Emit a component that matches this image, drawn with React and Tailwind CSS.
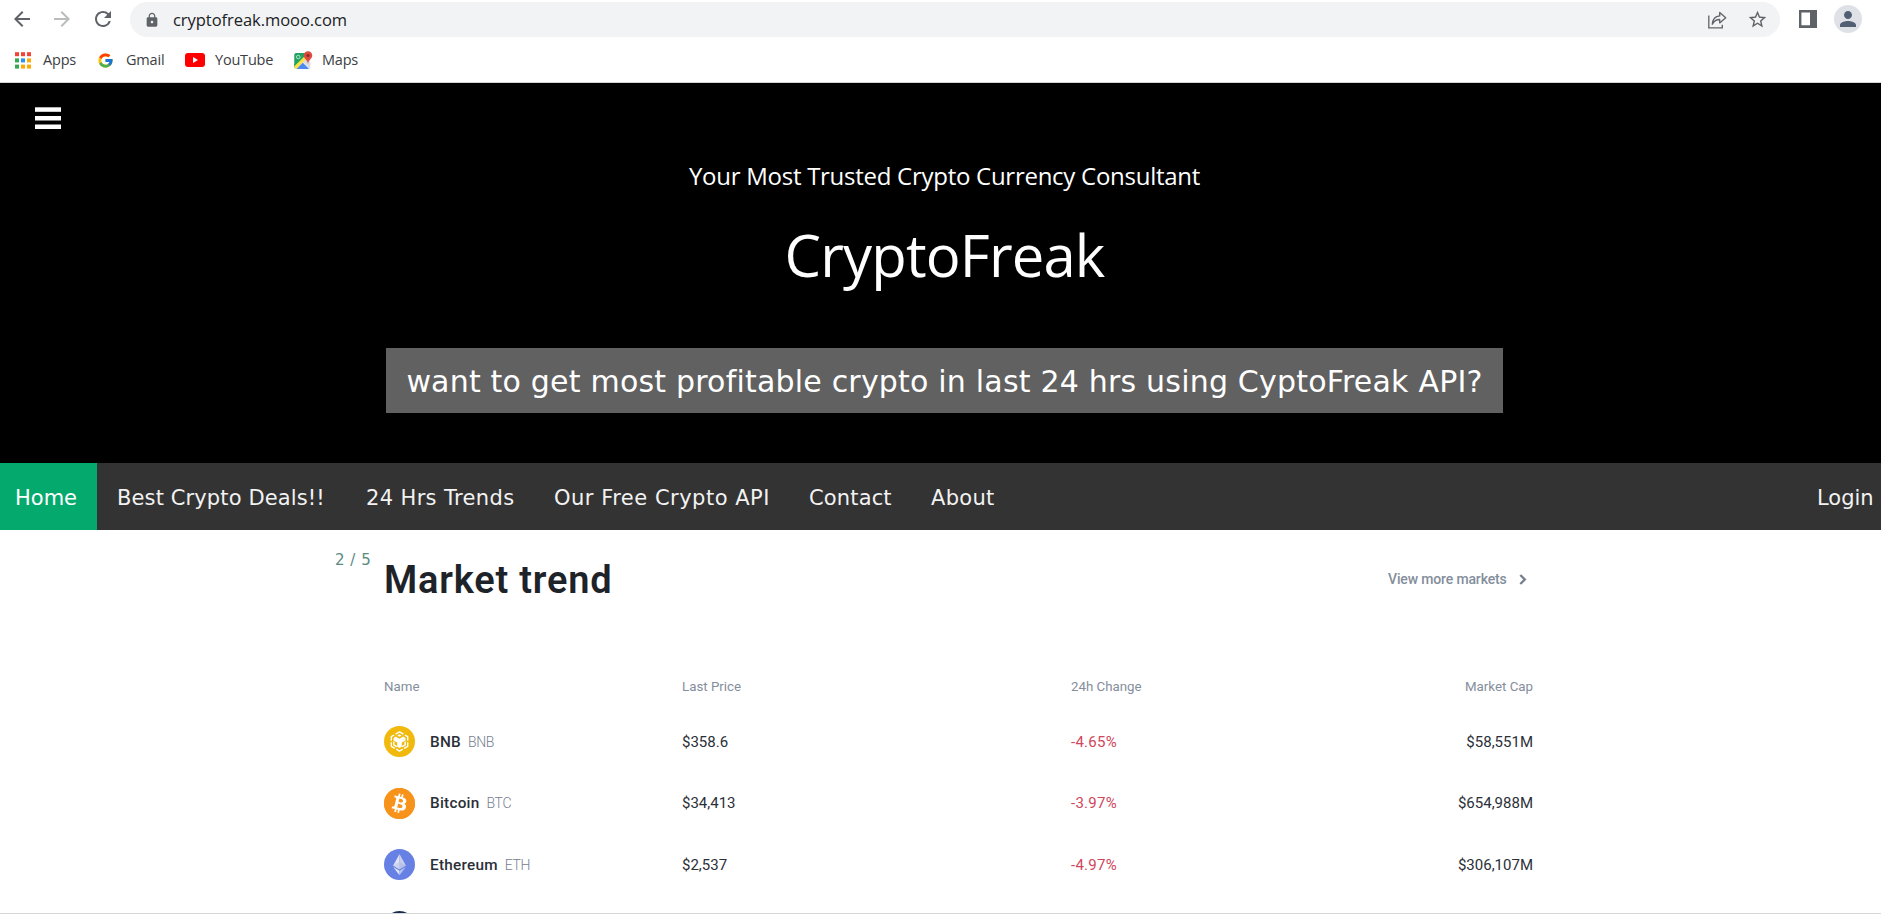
import React from 'react';
import { MdArrowBack, MdArrowForward, MdRefresh, MdLock, MdStarBorder, MdPerson } from 'react-icons/md';
import { FcGoogle } from 'react-icons/fc';
import { SiBitcoin } from 'react-icons/si';

function AppsIcon() {
  const colors = ['#f44336', '#f44336', '#f44336', '#34a853', '#2196f3', '#fbab05', '#34a853', '#fbab05', '#fbab05'];
  return (
    <svg className="h-[17px] w-[17px]" viewBox="0 0 17 17">
      {colors.map((c, i) => (
        <rect key={i} x={(i % 3) * 6} y={0.2 + Math.floor(i / 3) * 6.2} width="4" height="4" fill={c} />
      ))}
    </svg>
  );
}

function YouTubeIcon() {
  return (
    <svg className="h-[14px] w-[20px]" viewBox="0 0 20 14">
      <rect width="20" height="14" rx="3" fill="#f00" />
      <path d="M8 4.1v5.8l5-2.9z" fill="#fff" />
    </svg>
  );
}

function MapsIcon() {
  return (
    <svg className="h-[19px] w-[19px]" viewBox="0 0 19 19">
      <clipPath id="map">
        <rect x="0.3" y="2" width="16" height="16" rx="2" />
      </clipPath>
      <g clipPath="url(#map)">
        <rect width="19" height="19" fill="#e8eaed" />
        <path d="M0 0h16L0 17z" fill="#1ea362" />
        <path d="M12.5 4.5 0 17v-3.5L10 3z" fill="#1ea362" />
        <path d="M0 15.5 13 3l2 2.200L2.500 18H0z" fill="#ffe047" />
        <path d="M2 18.500l6.800-6.800 6.800 6.800z" fill="#4a89f3" />
        <path d="M9.500 11 13 8l4 4v6h-1z" fill="#d9dce1" />
      </g>
      <circle cx="4.300" cy="6" r="1.800" fill="none" stroke="#b9e2c9" strokeWidth="1" />
      <path d="M14 0.300a4.300 4.300 0 0 0-4.300 4.300c0 3 3.600 4 4.300 8.200.7-4.200 4.300-5.200 4.300-8.200A4.300 4.300 0 0 0 14 .3z" fill="#dd4b3e" />
      <circle cx="14" cy="4.600" r="1.500" fill="#822f2b" />
    </svg>
  );
}

function ShareIcon() {
  return (
    <svg className="h-[18px] w-[19px]" viewBox="0 0 19 18" fill="none" stroke="#5f6368" strokeWidth="1.3">
      <path d="M.8 4.500v12.300h13.500v-3" />
      <path d="M4.300 13.300C4.700 8 7.200 5.300 11.700 4.900V1.500l6 5.200-6 5.200V8.500c-3.400 0-5.700 1.500-7.400 4.800z" strokeLinejoin="round" />
    </svg>
  );
}

function SidePanelIcon() {
  return (
    <svg className="h-[18px] w-[18px]" viewBox="0 0 18 18">
      <path d="M0 0h18v18H0zM2.400 2.600v12.600h8.600V2.600z" fill="#5f6368" fillRule="evenodd" />
    </svg>
  );
}

function BnbIcon() {
  return (
    <svg className="h-[31px] w-[31px]" viewBox="0 0 31 31">
      <circle cx="15.500" cy="15.500" r="15.500" fill="#f0b90b" />
      <g fill="none" stroke="#fff" strokeWidth="1.400" strokeLinejoin="round">
        <path d="M11.500 8.200 15.500 5.900l4 2.300" />
        <path d="M10.200 9 7.300 10.700v4M7.300 16.300v4l3.600 2.100M20.800 9l2.900 1.700v4M23.700 16.300v4l-3.600 2.100" />
        <path d="M12.300 23.200l3.200 1.900 3.200-1.900" />
        <path d="M9.800 15.500v3.400l3 1.800M21.200 15.500v3.400l-3 1.800" />
      </g>
      <path d="M9.500 11.900l2.300-1.300 3.700 2.100 3.700-2.100 2.300 1.300v2.500l-3.700 2.100v4.200l-2.300 1.300-2.300-1.300v-4.200l-3.700-2.100z" fill="#fff" />
      <path d="M13.300 9.500l2.200-1.300 2.200 1.300-2.200 1.300z" fill="#fff" />
    </svg>
  );
}

function BtcIcon() {
  return (
    <span className="flex h-[31px] w-[31px] items-center justify-center rounded-full bg-[radial-gradient(circle,#fff_60%,#f7931a_62%)]">
      <SiBitcoin className="size-[31px] text-[#f7931a]" />
    </span>
  );
}

function EthIcon() {
  return (
    <svg className="h-[31px] w-[31px]" viewBox="0 0 31 31">
      <circle cx="15.500" cy="15.500" r="15.500" fill="#6780e3" />
      <path d="M15.500 5v15.200L9.200 16.400z" fill="#dfe3f5" />
      <path d="M15.500 5v15.200l6.300-3.800z" fill="#c9cfeb" />
      <path d="M15.500 12.800v7.400l-6.300-3.800z" fill="#ccd3ef" />
      <path d="M15.500 12.800v7.400l6.300-3.800z" fill="#b7c0e6" />
      <path d="M9.200 17.900l6.300 3.800v4.600z" fill="#e0e5fa" />
      <path d="M21.800 17.900l-6.300 3.800v4.600z" fill="#b7c3f0" />
    </svg>
  );
}

function DarkCoinIcon() {
  return (
    <svg className="h-[31px] w-[31px]" viewBox="0 0 31 31">
      <circle cx="15.500" cy="15.500" r="15.500" fill="#172b4d" />
    </svg>
  );
}

function BrowserBar() {
  return (
    <header className="h-[83px] border-b border-[#d3d5d8] bg-white font-['Open_Sans',sans-serif]">
      <div className="flex h-[38px] items-center">
        <MdArrowBack className="ml-[10px] size-6 text-[#5f6368]" />
        <MdArrowForward className="ml-4 size-6 text-[#babcbe]" />
        <MdRefresh className="ml-[17px] size-6 text-[#5f6368]" />
        <div className="ml-[15px] mt-px flex h-[35px] w-[1650px] items-center rounded-full bg-[#f1f3f4]">
          <MdLock className="ml-[14px] size-4 text-[#5f6368]" />
          <span className="ml-[13px] pt-px text-[16.5px] tracking-[-0.05px] text-[#202124]">cryptofreak.mooo.com</span>
          <span className="ml-auto"><ShareIcon /></span>
          <MdStarBorder className="ml-[20px] mr-[12px] size-[21px] text-[#5f6368]" />
        </div>
        <span className="ml-[19px]"><SidePanelIcon /></span>
        <span className="ml-[17px] flex size-7 items-center justify-center rounded-full bg-[#dee1e6]">
          <MdPerson className="size-6 text-[#525f73]" />
        </span>
      </div>
      <div className="flex h-[44px] items-center text-[14.5px] tracking-[-0.2px] text-[#3c4043]">
        <span className="flex w-[83px] items-center gap-[11px] pl-[15px]"><AppsIcon />Apps</span>
        <span className="flex w-[87px] items-center gap-[12px] pl-[14px]"><FcGoogle className="size-[17px] shrink-0" />Gmail</span>
        <span className="flex w-[110px] items-center gap-[10px] pl-[15px]"><YouTubeIcon />YouTube</span>
        <span className="flex items-center gap-[9px] pl-[14px]"><MapsIcon />Maps</span>
      </div>
    </header>
  );
}

function Hero() {
  return (
    <section className="h-[380px] bg-black pt-6 text-white">
      <svg className="ml-[35px] h-[22px] w-[26px]" viewBox="0 0 26 22" fill="#fff">
        <rect y="0.300" width="26" height="4.500" />
        <rect y="9" width="26" height="4.500" />
        <rect y="17.500" width="26" height="4.500" />
      </svg>
      <div className="mt-[29px] flex flex-col items-center pl-2">
        <p className="font-['Open_Sans',sans-serif] text-[24px] leading-9 tracking-[-0.27px]">
          Your Most Trusted Crypto Currency Consultant
        </p>
        <h1 className="mt-[21px] font-['Open_Sans',sans-serif] text-[58px] leading-[80px] tracking-[-0.85px]">CryptoFreak</h1>
        <button className="mt-[53px] h-[65px] w-[1117px] whitespace-nowrap bg-[#616161] pt-[2px] font-['DejaVu_Sans',sans-serif] text-[30px] leading-[63px] tracking-[0.2px]">
          want to get most profitable crypto in last 24 hrs using CyptoFreak API?
        </button>
      </div>
    </section>
  );
}

function NavBar() {
  return (
    <nav className="flex h-[67px] whitespace-nowrap bg-[#333] font-['DejaVu_Sans',sans-serif] text-[21px] leading-[70px] text-[#f2f2f2]">
      <a className="w-[97px] bg-[#04aa6d] pl-[15px] text-white">Home</a>
      <a className="w-[248px] pl-5 tracking-[0.12px]">Best Crypto Deals!!</a>
      <a className="w-[188px] pl-[21px] tracking-[0.36px]">24 Hrs Trends</a>
      <a className="w-[255px] pl-[21px] tracking-[0.5px]">Our Free Crypto API</a>
      <a className="w-[122px] pl-[21px] tracking-[0.15px]">Contact</a>
      <a className="pl-[21px] tracking-[0.3px]">About</a>
      <a className="ml-auto w-[64px]">Login</a>
    </nav>
  );
}

const coins = [
  { icon: <BnbIcon />, name: 'BNB', symbol: 'BNB', price: '$358.6', change: '-4.65%', cap: '$58,551M' },
  { icon: <BtcIcon />, name: 'Bitcoin', symbol: 'BTC', price: '$34,413', change: '-3.97%', cap: '$654,988M' },
  { icon: <EthIcon />, name: 'Ethereum', symbol: 'ETH', price: '$2,537', change: '-4.97%', cap: '$306,107M' },
  { icon: <DarkCoinIcon /> },
];

function MarketTrend() {
  return (
    <section className="flex h-[384px] overflow-hidden border-b border-[#d4d6d8] bg-white pl-[335px]">
      <span className="w-[49px] pt-5 font-['DejaVu_Sans',sans-serif] text-[15px] leading-5 tracking-[0.5px] text-[#5b8a81]">2 / 5</span>
      <div className="w-[1149px] shrink-0 pt-[19px] font-['Roboto',sans-serif]">
        <div className="flex h-[60px] items-center">
          <h2 className="pt-[2px] text-[38px] font-semibold tracking-[0.8px] text-[#1e2329]">Market trend</h2>
          <a className="ml-auto flex w-[145px] items-center text-[14px] font-medium tracking-[-0.15px] text-[#848e9c]">
            View more markets
            <svg className="ml-[12px] h-[11px] w-[8px]" viewBox="0 0 8 11" fill="none" stroke="#76808f" strokeWidth="2.400">
              <path d="M1.300 1l4.500 4.500L1.300 10" />
            </svg>
          </a>
        </div>
        <div className="mt-[68px] flex h-5 items-center text-[13.3px] text-[#848e9c]">
          <span className="w-[298px]">Name</span>
          <span className="w-[389px]">Last Price</span>
          <span>24h Change</span>
          <span className="ml-auto">Market Cap</span>
        </div>
        <div className="mt-[14px]">
          {coins.map((coin, i) => (
            <div key={i} className="flex h-[61.500px] items-center text-[15px] text-[#2b3038]">
              <div className="flex w-[298px] items-center">
                {coin.icon}
                <span className="ml-[15px] pt-px text-[15.3px] font-medium tracking-[0.25px]">{coin.name}</span>
                <span className="ml-[7px] pt-px text-[14px] font-light tracking-[-0.3px] text-[#76808f]">{coin.symbol}</span>
              </div>
              <span className="w-[389px]">{coin.price}</span>
              <span className="tracking-[0.25px] text-[#d0465c]">{coin.change}</span>
              <span className="ml-auto">{coin.cap}</span>
            </div>
          ))}
        </div>
      </div>
    </section>
  );
}

export default function App() {
  return (
    <div className="h-[922px] overflow-hidden bg-white">
      <BrowserBar />
      <Hero />
      <NavBar />
      <MarketTrend />
    </div>
  );
}
